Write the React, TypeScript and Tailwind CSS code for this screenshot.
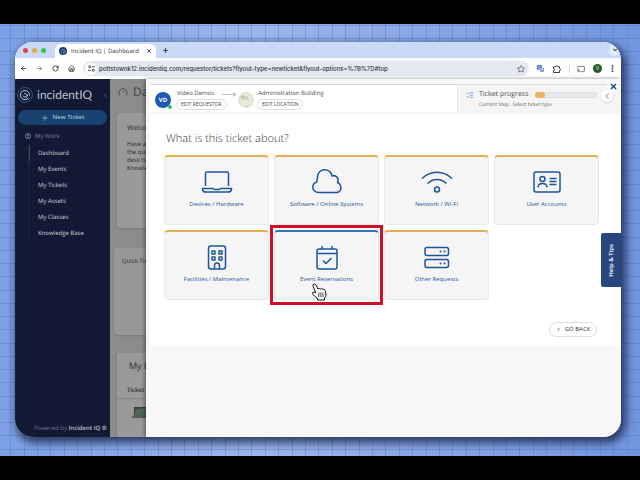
import type { ReactNode } from "react";
import { ArrowLeft, ArrowRight, Cast, ChevronDown, ChevronLeft, EllipsisVertical, Gauge, House, ListChecks, Plus, RotateCw, Star, X } from "lucide-react";

const navItems = ["Dashboard", "My Events", "My Tickets", "My Assets", "My Classes", "Knowledge Base"];

const categories: { label: string; icon: ReactNode; active?: boolean }[] = [
  {
    label: "Devices / Hardware",
    icon: (
      <>
        <path d="M3.500 16V3.500Q3.500 2 5 2H25Q26.500 2 26.500 3.500V16" />
        <path d="M.5 18.500H11.500Q12 19.500 13 19.500H17Q18 19.500 18.500 18.500H29.500V19.500Q29 22 26.500 22H3.500Q1 22 .5 19.500Z" />
      </>
    ),
  },
  {
    label: "Software / Online Systems",
    icon: (
      <path d="M6 22.500H24.500A4.800 4.800 0 0 0 28.500 15.500 5.500 5.500 0 0 0 25.500 12.500 4.500 4.500 0 0 0 20 6 7.300 7.300 0 0 0 5.500 8Q4.500 10 5 12A5.500 5.500 0 0 0 .8 16.500 5.500 5.500 0 0 0 6 22.500Z" />
    ),
  },
  {
    label: "Network / Wi-Fi",
    icon: (
      <>
        <path d="M0 8.500C8.500 0 21.500 0 30 8.500M5.500 13.500C11 8 19 8 24.500 13.500" />
        <circle cx="15" cy="19.500" r="2.500" />
      </>
    ),
  },
  {
    label: "User Accounts",
    icon: (
      <>
        <rect x="2" y="2" width="26" height="20" rx="2" />
        <circle cx="10.500" cy="9" r="2.500" />
        <path d="M6 17.500Q6 13.500 10.500 13.500T15 17.500M17.500 8.500H24.500M17.500 11.500H24.500M17.500 14.500H24.500" />
      </>
    ),
  },
  {
    label: "Facilities / Maintenance",
    icon: (
      <>
        <rect x="6.500" y="1" width="17" height="23" rx="2.500" />
        <path d="M10 6h3v3h-3ZM17 6h3v3h-3ZM10 12h3v3h-3ZM17 12h3v3h-3ZM12.500 24V20.500A2.500 2.500 0 0 1 17.500 20.500V24" />
      </>
    ),
  },
  {
    label: "Event Reservations",
    active: true,
    icon: (
      <>
        <rect x="5" y="4" width="20" height="20" rx="2" />
        <path d="M5 8.500H25M10 4V1M20 4V1M11 15.500L14 18.500 19.500 13" />
      </>
    ),
  },
  {
    label: "Other Requests",
    icon: (
      <>
        <rect x="3" y="2.500" width="23.500" height="8" rx="2" />
        <rect x="3" y="14.500" width="23.500" height="8" rx="2" />
        <path strokeWidth="2" strokeLinecap="round" d="M18.500 6.500h.01M22.500 6.500h.01M18.500 18.500h.01M22.500 18.500h.01" />
      </>
    ),
  },
];

function GridPaper() {
  return (
    <svg className="absolute inset-0 size-full" aria-hidden="true">
      <defs>
        <linearGradient id="sky" x1="0" x2="1" y1="0" y2="0">
          <stop offset="0" stopColor="#7c9fe6" />
          <stop offset="0.4" stopColor="#9bb6eb" />
          <stop offset="1" stopColor="#7295e0" />
        </linearGradient>
        <pattern id="paper" width="67" height="53" y="-24" patternUnits="userSpaceOnUse">
          <path
            d="M10.500 0V53M24.500 0V53M37.500 0V53M50.500 0V53M64.500 0V53M0 11.500H67M0 25.500H67M0 38.500H67M0 51.500H67"
            stroke="#5676b5"
            strokeOpacity="0.4"
          />
        </pattern>
      </defs>
      <rect width="100%" height="100%" fill="url(#sky)" />
      <rect width="100%" height="100%" fill="url(#paper)" />
    </svg>
  );
}

function LogoMark({ className }: { className: string }) {
  return (
    <svg viewBox="0 0 16 16" fill="none" className={className} aria-hidden="true">
      <circle cx="8" cy="8" r="7.400" stroke="#3f6c9d" strokeWidth="0.800" />
      <path d="M11 11.500A4.600 4.600 0 1 1 12.500 8.500M7 6L11 8.500 8.500 9.500 11.500 12.500M6 8.500A2 2 0 0 0 8 10" stroke="#b9c9dd" strokeWidth="1" />
    </svg>
  );
}

function BrowserChrome() {
  return (
    <header className="relative">
      <div className="flex h-4 items-end bg-[#c9d9f7] pl-2">
        <div className="flex h-4 w-8 items-center gap-1">
          <span className="size-[5px] rounded-full bg-[#e0435a]" />
          <span className="size-[5px] rounded-full bg-[#e9a648]" />
          <span className="size-[5px] rounded-full bg-[#32c351]" />
        </div>
        <div className="flex h-[14px] w-[101px] items-center rounded-t-md bg-white px-1">
          <span className="flex size-2 items-center justify-center rounded-full bg-[#17396b]">
            <LogoMark className="size-[7px]" />
          </span>
          <span className="ml-1 flex-1 text-[6px] leading-none whitespace-nowrap text-[#333]">Incident IQ | Dashboard</span>
          <button aria-label="Close tab" className="text-[#222]"><X size={6} strokeWidth={3} /></button>
        </div>
        <button aria-label="New tab" className="mb-1 ml-[6px] text-[#333]"><Plus size={7} strokeWidth={3} /></button>
        <button aria-label="Search tabs" className="mb-[2px] ml-auto flex size-3 items-center justify-center rounded-full bg-[#e3ebfb]">
          <ChevronDown size={6} strokeWidth={4} />
        </button>
      </div>
      <div className="flex h-[21px] items-center bg-white pr-1 pl-[5px] text-[#3b3b3b]">
        <div className="flex w-[63px] items-center gap-[9px]">
          <button aria-label="Back"><ArrowLeft size={7} strokeWidth={3} /></button>
          <button aria-label="Forward" className="text-[#888]"><ArrowRight size={7} strokeWidth={3} /></button>
          <button aria-label="Reload"><RotateCw size={7} strokeWidth={3} /></button>
          <button aria-label="Home"><House size={7} strokeWidth={3} /></button>
        </div>
        <div className="flex h-[15px] flex-1 items-center rounded-full bg-[#e4e8f2] pr-1 pl-[2px]">
          <button aria-label="Site information" className="flex size-3 items-center justify-center rounded-full bg-white">
            <svg viewBox="0 0 8 8" className="size-[7px]" fill="none" stroke="currentColor">
              <path d="M4.500 2H8M0 6H3.500" />
              <circle cx="2" cy="2" r="1.200" />
              <circle cx="6" cy="6" r="1.200" />
            </svg>
          </button>
          <input
            aria-label="Address"
            className="ml-[2px] min-w-0 flex-1 bg-transparent font-['Inter',sans-serif] text-[6px] font-medium text-[#333] outline-none"
            defaultValue="pottstownk12.incidentiq.com/requestor/tickets?flyout-type=newticket&flyout-options=%7B%7D#top"
          />
          <button aria-label="Bookmark"><Star size={8} strokeWidth={2} /></button>
        </div>
        <div className="ml-2 flex items-center">
          <button aria-label="Translate">
            <svg viewBox="0 0 8 8" className="size-[7px]">
              <rect width="5.500" height="5.500" rx="0.800" fill="#3d6fd6" />
              <rect x="3.500" y="3" width="4.500" height="5" rx="0.800" fill="#7d9bcf" />
              <path d="M4 2.400A1.400 1.400 0 1 0 4 3.200H3M5 5h2M6 4.500V5Q6 6.500 5 7" stroke="#fff" strokeWidth="0.600" fill="none" />
            </svg>
          </button>
          <button aria-label="Extensions" className="ml-[9px]">
            <svg viewBox="0 0 8 8" className="size-2" fill="none" stroke="currentColor">
              <path d="M.5 1.800H2.500A1 1 0 0 1 4.700 1.800H6.500V3.600A1 1 0 0 1 6.500 5.600V7.500H.5V5.700A1 1 0 0 0 .5 3.700Z" />
            </svg>
          </button>
          <span className="ml-2 h-2 w-px bg-[#d0d6e4]" />
          <button aria-label="Cast" className="ml-[7px]"><Cast size={8} strokeWidth={2} /></button>
          <button aria-label="Profile" className="ml-2 size-[9px] rounded-full bg-[#265c20] text-center text-[5px] leading-[9px] text-white">V</button>
          <button aria-label="Menu" className="ml-[6px]"><EllipsisVertical size={9} strokeWidth={3} /></button>
        </div>
      </div>
    </header>
  );
}

function Sidebar() {
  return (
    <aside className="flex w-[95px] shrink-0 flex-col bg-[#121934] text-[#c0c5d2]">
      <div className="flex items-center pt-2 pl-[2px]">
        <LogoMark className="size-4" />
        <span className="ml-1 font-['Lato',sans-serif] text-[12px] leading-4 text-[#bdc4d0]">incidentIQ</span>
        <button aria-label="Collapse menu" className="mr-px ml-auto text-[#7d86a0]"><ChevronLeft size={7} /></button>
      </div>
      <button className="mx-[3px] mt-[7px] flex h-[15px] items-center justify-center gap-1 rounded-full bg-[#174272] text-[6px] font-semibold text-[#aebfd3]">
        <Plus size={8} strokeWidth={2} />
        New Ticket
      </button>
      <div className="mt-[5px] flex h-3 items-center gap-1 pl-[10px] text-[6px] text-[#7c8297]">
        <svg viewBox="0 0 8 8" className="size-[6px]" fill="none" stroke="currentColor">
          <circle cx="4" cy="4" r="3.500" />
          <circle cx="4" cy="3" r="1.200" />
          <path d="M2 6.500Q4 3.500 6 6.500" />
        </svg>
        My Work
      </div>
      <nav className="mt-[3px] ml-[13px] flex flex-col border-l border-[#1f2745]">
        {navItems.map((item) => (
          <a key={item} href="#" className="flex h-4 items-center border-l border-transparent pl-2 text-[6px] text-[#ccd0da] first:border-[#45464c]">
            {item}
          </a>
        ))}
      </nav>
      <p className="mt-auto pb-[3px] pl-[19px] text-[6px] leading-3 whitespace-nowrap text-[#70768a]">
        Powered by <strong className="font-semibold text-[#bfc4d0]">Incident IQ ®</strong>
      </p>
    </aside>
  );
}

function DashboardBehind() {
  return (
    <main className="w-9 shrink-0 overflow-hidden bg-[#8c8c8c] text-[#2c2c2c]">
      <div className="flex w-24 flex-col">
        <h1 className="flex h-[34px] items-center gap-[5px] pb-2 pl-2 text-[12px] text-[#444]">
          <Gauge size={10} strokeWidth={2} />
          Dash
        </h1>
        <section className="ml-[7px] h-[115px] rounded-sm bg-[#999] pt-[10px] pl-[10px] shadow-sm">
          <h2 className="text-[7px] leading-3">Welcome</h2>
          <p className="mt-[5px] text-[6px] leading-2 whitespace-nowrap">
            Have a
            <br />
            the quick
            <br />
            desk ticket
            <br />
            Knowledge
          </p>
        </section>
        <section className="mt-5 ml-1 h-[87px] rounded-sm bg-[#979797] pt-[7px] pl-2 shadow-sm">
          <h2 className="text-[6px] leading-3">Quick Tickets</h2>
        </section>
        <section className="mt-[18px] ml-[7px] h-[84px] bg-[#999] pt-[5px] shadow-sm">
          <h2 className="pl-3 text-[9px] leading-4">My Requests</h2>
          <h3 className="mt-[10px] border-b border-[#858585] pb-[2px] pl-[10px] text-[6px] leading-3 font-semibold">Ticket</h3>
          <svg viewBox="0 0 20 12" className="mt-2 ml-[14px] h-3 w-5" aria-hidden="true">
            <path d="M3 0H17V9H3Z" fill="#34423b" />
            <path d="M4 2L16 1V8H4Z" fill="#4b6857" />
            <path d="M1 10L3 8H18L19 10V11H1Z" fill="#555b5c" />
          </svg>
        </section>
      </div>
    </main>
  );
}

function FlyoutHeader() {
  return (
    <header className="relative mt-[5px] flex h-7 border-t border-[#d9d9d9] bg-white">
      <div className="flex flex-1 pt-[3px] pl-[5px]">
        <span className="relative mt-1 flex size-4 items-center justify-center rounded-full bg-[#1c5ab0] text-[6px] font-bold text-white">
          VD
          <span className="absolute -right-px -bottom-px size-1 rounded-full bg-[#2fc34b]" />
        </span>
        <div className="ml-[6px] w-[61px]">
          <div className="flex items-center justify-between text-[6px] leading-[11px] whitespace-nowrap text-[#4d4d4d]">
            Video Demos
            <svg viewBox="0 0 16 6" className="h-[6px] w-4" fill="none" stroke="#c3c3c3" aria-hidden="true">
              <path d="M0 3.500H12" />
              <path d="M11 1L15 3.500 11 6Z" fill="#c3c3c3" stroke="none" />
            </svg>
          </div>
          <button className="-ml-px flex h-[11px] items-center rounded-full border border-[#ddd] px-1 text-[5px] leading-none whitespace-nowrap text-[#444]">EDIT REQUESTOR</button>
        </div>
        <svg viewBox="0 0 16 16" className="mt-1 size-4 shrink-0" aria-hidden="true">
          <circle cx="8" cy="8" r="7.500" fill="#e7ebdc" stroke="#dcdcdc" />
          <path d="M2 5H10M3 7H11M8 14H10M5 3V6" stroke="#a4b18b" strokeWidth="0.800" />
        </svg>
        <div className="ml-1">
          <p className="text-[6px] leading-[11px] whitespace-nowrap text-[#4d4d4d]">Administration Building</p>
          <button className="-ml-px flex h-[11px] items-center rounded-full border border-[#ddd] px-1 text-[5px] leading-none whitespace-nowrap text-[#444]">EDIT LOCATION</button>
        </div>
      </div>
      <div className="flex w-[164px] gap-[5px] border-l border-[#e4e4e4] bg-[#f5f5f5] pt-1 pl-2">
        <ListChecks size={8} strokeWidth={2} className="mt-[2px] text-[#4c86c2]" />
        <div>
          <div className="flex items-center gap-[6px]">
            <span className="w-[50px] text-[7px] leading-3 whitespace-nowrap text-[#4d4d4d]">Ticket progress</span>
            <div role="progressbar" aria-label="Ticket progress" aria-valuenow={16} className="h-[6px] w-[62px] rounded-full border border-[#e0e0e0] bg-[#e9e9e9]">
              <div className="-my-px -ml-px h-[6px] w-[10px] rounded-full bg-[#efb45b]" />
            </div>
          </div>
          <p className="text-[5px] leading-[9px] text-[#666]">Current Step: &nbsp;Select ticket type</p>
        </div>
      </div>
      <button aria-label="Previous steps" className="absolute top-[5px] right-2 flex size-3 items-center justify-center rounded-full bg-white text-[#41719f] shadow">
        <ChevronLeft size={10} strokeWidth={2} />
      </button>
      <button aria-label="Close" className="absolute -top-[5px] right-[2px] flex size-3 items-center justify-center rounded-full bg-white text-[#1d4f91]">
        <X size={9} strokeWidth={4} />
      </button>
    </header>
  );
}

function HandCursor() {
  return (
    <svg viewBox="0 0 16 18" className="absolute top-[53px] left-[37px] h-[18px] w-4" aria-hidden="true">
      <path
        d="M2.800 1Q4.300 .5 5 2L7 6Q8.500 5 9.500 6 11 5 11.800 6.300 13.500 5.800 14 7.500L15 11Q15.300 13.500 13.500 15V17H6.500V15.500L1.500 11Q.8 9.700 2 9.200T4.800 10L2 3Q1.700 1.600 2.800 1Z"
        fill="#fff"
        stroke="#111"
      />
      <path d="M7.800 9.500V14M9.900 9.500V14M12 9.500V14" stroke="#111" strokeWidth="0.800" />
    </svg>
  );
}

function CategoryCard({ label, icon, active }: { label: string; icon: ReactNode; active?: boolean }) {
  return (
    <div className="relative">
      <button
        className={`flex h-[70px] w-full flex-col items-center rounded-sm border border-t-2 border-[#e8e8e8] bg-[#f5f5f5] pt-[13px] ${
          active ? "border-t-[#3473b5]" : "border-t-[#e7ad51]"
        }`}
      >
        <svg viewBox="0 0 30 25" className="h-[25px] w-[30px] overflow-visible" fill="none" stroke="#1c559c" strokeWidth="1.500" strokeLinejoin="round" aria-hidden="true">
          {icon}
        </svg>
        <span className="mt-1 text-[6px] leading-[10px] whitespace-nowrap text-[#1c559c]">{label}</span>
      </button>
      {active && (
        <>
          <span className="pointer-events-none absolute -inset-x-1 -inset-y-[5px] border-3 border-[#cf1126]" />
          <HandCursor />
        </>
      )}
    </div>
  );
}

function TicketFlyout() {
  return (
    <section className="relative flex-1 bg-[#f7f7f7] pl-1 shadow-[-1px_0_4px_rgba(0,0,0,0.45)]">
      <FlyoutHeader />
      <div className="mt-[3px] bg-white pt-4 pr-[22px] pb-[9px] pl-[14px]">
        <h2 className="pl-[2px] text-[11px] leading-4 font-light text-[#333]">What is this ticket about?</h2>
        <div className="mt-2 grid grid-cols-4 gap-[5px]">
          {categories.map((category) => (
            <CategoryCard key={category.label} {...category} />
          ))}
        </div>
        <button className="mt-[22px] mr-[2px] ml-auto flex h-[15px] w-12 items-center justify-center gap-1 rounded-full border border-[#ddd] bg-white text-[6px] whitespace-nowrap text-[#333]">
          <ChevronLeft size={5} strokeWidth={3} />
          GO BACK
        </button>
      </div>
      <button className="absolute top-[154px] right-0 flex h-[54px] w-5 items-center justify-center rounded-l-[2px] bg-[#29477e] text-white">
        <span className="rotate-180 text-[6px] font-semibold [writing-mode:vertical-rl]">Help &amp; Tips</span>
      </button>
    </section>
  );
}

export default function App() {
  return (
    <div className="flex min-h-screen flex-col bg-black py-6 font-['Open_Sans',sans-serif] [text-rendering:geometricPrecision]">
      <div className="relative flex flex-1 flex-col overflow-hidden pt-[18px] pr-[19px] pb-[19px] pl-[15px]">
        <GridPaper />
        <div className="relative flex flex-1 flex-col overflow-hidden rounded-[18px] bg-white shadow-[3px_4px_9px_2px_rgba(20,35,70,0.8)]">
          <BrowserChrome />
          <div className="flex flex-1">
            <Sidebar />
            <DashboardBehind />
            <TicketFlyout />
          </div>
        </div>
      </div>
    </div>
  );
}
